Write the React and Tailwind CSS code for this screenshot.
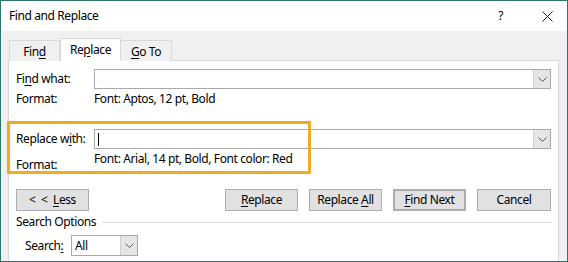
import React from 'react';

const font = { fontFamily: '"Noto Sans", "Open Sans", sans-serif' };

function U({ children }) {
  return <span className="underline underline-offset-2">{children}</span>;
}

function Combo({ children, className = '' }) {
  return (
    <div className={`flex border border-[#a9a9a9] bg-white ${className}`}>
      <div className="flex flex-1 items-center px-[3px]">{children}</div>
      <div className="flex w-[17px] items-center justify-center border-l border-[#cfcfcf] bg-[#e5e5e5]">
        <svg width="9" height="5" viewBox="0 0 9 5">
          <path d="M0.5 0.5 L4.5 4.5 L8.5 0.5" fill="none" stroke="#555" strokeWidth="1" />
        </svg>
      </div>
    </div>
  );
}

function Btn({ children, className = '' }) {
  return (
    <button
      className={`flex h-[22px] w-[73px] items-center justify-center border border-[#adadad] bg-[#e1e1e1] text-[12px] text-black ${className}`}
    >
      <span className="whitespace-pre">{children}</span>
    </button>
  );
}

export default function App() {
  return (
    <div
      style={font}
      className="flex h-[262px] w-[568px] flex-col overflow-hidden border border-[#2f7568] bg-[#f0f0f0] text-[12px] leading-[16px] tracking-[-0.4px] text-black"
    >
      {/* title bar */}
      <div className="flex h-[30px] shrink-0 items-center bg-white pl-[8px] pr-[14px]">
        <span className="flex-1 text-[12px]">Find and Replace</span>
        <span className="mr-[39px] text-[12px]">?</span>
        <svg width="11" height="11" viewBox="0 0 11 11">
          <path d="M0.5 0.5 L10.5 10.5 M10.5 0.5 L0.5 10.5" stroke="#222" strokeWidth="1" />
        </svg>
      </div>

      <div className="flex flex-1 flex-col pl-[7px] pr-[8px] pt-[7px]">
        {/* tabs */}
        <div className="relative z-10 flex h-[23px] items-end pl-[1px]">
          <div className="flex h-[21px] w-[51px] items-center justify-center border border-b-0 border-[#d9d9d9] bg-[#f0f0f0] pt-[1px]">
            <span>Fin<U>d</U></span>
          </div>
          <div className="flex h-[23px] w-[61px] items-start justify-center border border-b-0 border-[#d9d9d9] bg-white pt-[3px]">
            <span>Re<U>p</U>lace</span>
          </div>
          <div className="flex h-[21px] w-[51px] items-center justify-center border border-b-0 border-l-0 border-[#d9d9d9] bg-[#f0f0f0] pt-[1px]">
            <span><U>G</U>o To</span>
          </div>
        </div>

        {/* panel */}
        <div className="relative -mt-[1px] flex flex-1 flex-col border border-b-0 border-[#d9d9d9] bg-white pl-[7px] pr-[7px]">
          <div className="mt-[8px] flex h-[20px] items-center">
            <span className="w-[78px]">
              Fi<U>n</U>d what:
            </span>
            <Combo className="h-[20px] flex-1" />
          </div>
          <div className="mt-[2px] flex h-[16px] items-center">
            <span className="w-[78px]">Format:</span>
            <span>Font: Aptos, 12 pt, Bold</span>
          </div>

          <div className="mt-[22px] flex h-[20px] items-center">
            <span className="w-[78px]">
              Replace w<U>i</U>th:
            </span>
            <Combo className="h-[20px] flex-1">
              <span className="h-[13px] w-px bg-black" />
            </Combo>
          </div>
          <div className="flex h-[24px]">
            <span className="w-[78px] pt-[8px]">Format:</span>
            <span className="pt-[2px]">Font: Arial, 14 pt, Bold, Font color: Red</span>
          </div>

          <div className="mt-[16px] flex items-center">
            <Btn>
              <span className="tracking-[1px]">{'< < '}</span>
              <U>L</U>ess
            </Btn>
            <div className="flex-1" />
            <div className="flex gap-[11px]">
              <Btn className="w-[72px]">
                <U>R</U>eplace
              </Btn>
              <Btn>
                {'Replace '}<U>A</U>ll
              </Btn>
              <Btn className="border-2 border-[#0078d7]">
                <U>F</U>ind Next
              </Btn>
              <Btn className="w-[74px]">Cancel</Btn>
            </div>
          </div>

          <div className="mt-[3px] flex h-[16px] items-center">
            <span className="pr-[6px]">Search Options</span>
            <div className="h-px flex-1 bg-[#dcdcdc]" />
          </div>

          <div className="mt-[5px] flex h-[21px] items-center pl-[9px]">
            <span className="w-[46px]">
              Search<U>:</U>
            </span>
            <Combo className="h-[21px] w-[67px]">All</Combo>
          </div>

          {/* highlight annotation */}
          <div className="pointer-events-none absolute left-[-2px] top-[60px] h-[53px] w-[304px] border-[3px] border-[#eeac22]" />
        </div>
      </div>
    </div>
  );
}
